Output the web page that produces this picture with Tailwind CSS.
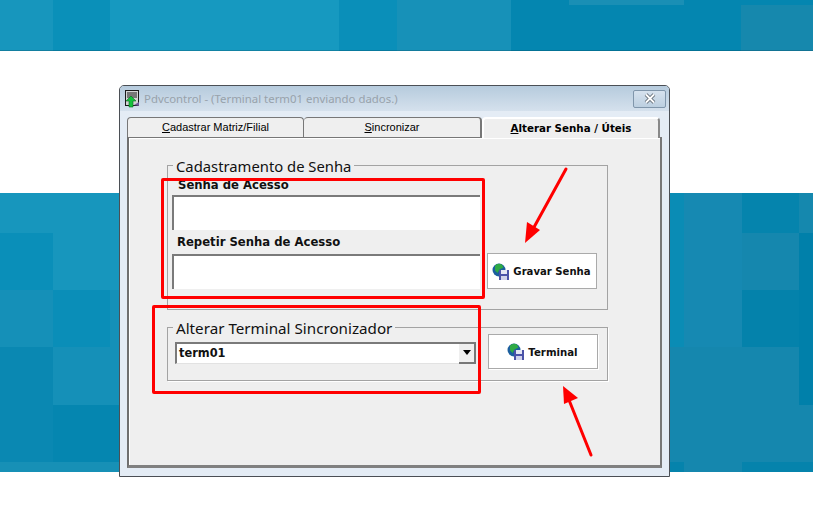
<!DOCTYPE html>
<html lang="pt">
<head>
<meta charset="utf-8">
<title>Pdvcontrol</title>
<script src="https://cdn.jsdelivr.net/npm/@tailwindcss/browser@4"></script>
</head>
<body class="bg-white overflow-hidden">
<div class="relative w-[813px] h-[532px] bg-white overflow-hidden font-['Noto_Sans',sans-serif]">

  <svg class="absolute left-0 top-0" width="813" height="532" shape-rendering="crispEdges" aria-hidden="true">
    <rect x="0" y="0" width="53" height="51" fill="#1796bd"/>
    <rect x="53" y="0" width="57" height="51" fill="#0a90b9"/>
    <rect x="110" y="0" width="229" height="51" fill="#1699c0"/>
    <rect x="339" y="0" width="58" height="51" fill="#0a8fb9"/>
    <rect x="397" y="0" width="114" height="51" fill="#1791b8"/>
    <rect x="511" y="0" width="302" height="51" fill="#0486b0"/>
    <rect x="569" y="0" width="115" height="5" fill="#1a8fb5"/>
    <rect x="741" y="5" width="72" height="46" fill="#1688ad"/>
    <rect x="0" y="50" width="813" height="1" fill="#000" fill-opacity=".15"/>

    <rect x="0" y="193" width="813" height="279" fill="#1590b8"/>
    <rect x="0" y="193" width="130" height="40" fill="#1796bd"/>
    <rect x="53" y="233" width="77" height="57" fill="#1796bd"/>
    <rect x="0" y="233" width="53" height="57" fill="#0a8fb9"/>
    <rect x="53" y="290" width="57" height="57" fill="#0a8eb8"/>
    <rect x="0" y="347" width="53" height="115" fill="#0a88b2"/>
    <rect x="53" y="405" width="70" height="57" fill="#0586b0"/>
    <rect x="0" y="462" width="130" height="10" fill="#1790b6"/>

    <rect x="660" y="193" width="24" height="154" fill="#0a8cb5"/>
    <rect x="684" y="193" width="58" height="279" fill="#1689b2"/>
    <rect x="742" y="193" width="57" height="40" fill="#0584ad"/>
    <rect x="799" y="193" width="14" height="40" fill="#1588ae"/>
    <rect x="742" y="233" width="57" height="57" fill="#1587ae"/>
    <rect x="799" y="233" width="14" height="172" fill="#0080aa"/>
    <rect x="742" y="290" width="57" height="57" fill="#0482ab"/>
    <rect x="660" y="347" width="139" height="115" fill="#1587ae"/>
    <rect x="799" y="405" width="14" height="57" fill="#1587ae"/>
    <rect x="660" y="462" width="24" height="10" fill="#0583ac"/>
    <rect x="684" y="462" width="58" height="10" fill="#1587ae"/>
    <rect x="742" y="462" width="71" height="10" fill="#0583ac"/>
  </svg>

  <!-- Window -->
  <div class="absolute left-[119px] top-[85px] w-[551px] h-[392px] border border-[#4b4f55] rounded-t-[5px] bg-[#e4ecf5] flex flex-col px-[7px] pb-[8px]">
    <!-- Title bar -->
    <div class="h-[25px] -mx-[7px] pl-[4px] pr-[3px] rounded-t-[4px] bg-gradient-to-b from-[#b6cbdd] to-[#d5e1ed] flex items-center shrink-0">
      <svg width="16" height="18" viewBox="0 0 16 18" class="shrink-0" aria-hidden="true">
        <rect x="1.500" y="0.500" width="13" height="15" fill="#d4d4d4" stroke="#1a1a1a"/>
        <path d="M3 3h10M3 5h10M3 7h10" stroke="#1a1a1a"/>
        <path d="M7 6l5 5h-3v6H5v-6H2z" fill="#14c23c" stroke="#0a6a20" stroke-width=".6"/>
        <path d="M10 15l5-3v4z" fill="#6f5a9a"/>
      </svg>
      <span class="ml-[4px] text-[11.4px] leading-none text-[#98a2ab] whitespace-nowrap">Pdvcontrol - (Terminal term01 enviando dados.)</span>
      <div class="ml-auto w-[33px] h-[18px] rounded-[2px] border border-[#8096ab] bg-gradient-to-b from-[#d6e2ee] to-[#bccfe0] flex items-center justify-center">
        <svg width="14" height="11" viewBox="0 0 14 11" aria-hidden="true">
          <path d="M3 1.500l8 8M11 1.500l-8 8" stroke="#5c6670" stroke-width="3.6"/>
          <path d="M3 1.500l8 8M11 1.500l-8 8" stroke="#fff" stroke-width="1.800"/>
        </svg>
      </div>
    </div>

    <!-- Tabs -->
    <div class="flex h-[20px] mt-[6px] shrink-0 text-[11px] text-black font-['Liberation_Sans',sans-serif]">
      <div class="w-[177px] rounded-t-[4px] border border-b-0 border-[#777] bg-[#efefef] flex items-center justify-center"><span><span class="underline">C</span>adastrar Matriz/Filial</span></div>
      <div class="w-[178px] rounded-t-[4px] border-t border-r-2 border-[#777] bg-[#efefef] flex items-center justify-center"><span><span class="underline">S</span>incronizar</span></div>
      <div class="w-[178px] rounded-t-[4px] border-t-2 border-l-2 border-t-[#fff] border-l-[#fff] border-r-2 border-r-[#888] bg-[#efefef] flex items-center justify-center font-bold font-['DejaVu_Sans',sans-serif] text-[10.3px] -mb-[1px] relative z-10"><span><span class="underline">A</span>lterar Senha / Úteis</span></div>
    </div>

    <!-- Tab panel -->
    <div class="flex-1 border-l-2 border-l-[#6f6f6f] border-t border-t-[#777] border-r-2 border-r-[#777] border-b-[3px] border-b-[#808080] bg-[#efefef] shadow-[inset_1px_1px_0_#fff] pl-[38px] pr-[51px] pt-[16px]">

      <fieldset class="w-[441px] h-[156px] border border-[#a3a3a3] pl-[4px] pr-[9px]">
        <legend class="ml-[1px] px-[3px] text-[14.8px] leading-[22px] text-[#111]"><span class="relative top-[1px]">Cadastramento de Senha</span></legend>
        <div class="flex items-end">
          <div class="w-[308px] font-['DejaVu_Sans',sans-serif] font-bold text-[11.65px] text-[#111]">
            <div class="h-[19px] pl-[6px] pt-[3px] leading-[12px]">Senha de Acesso</div>
            <div class="h-[35px] bg-white border-t-2 border-l-2 border-[#7a7a7a]"></div>
            <div class="h-[24px] pl-[5px] pt-[3px] leading-[18px]">Repetir Senha de Acesso</div>
            <div class="h-[35px] bg-white border-t-2 border-l-2 border-[#7a7a7a]"></div>
          </div>
          <button class="ml-[7px] w-[110px] h-[36px] bg-white border border-[#aaa] flex items-center justify-center gap-[2px] font-['DejaVu_Sans',sans-serif] font-bold text-[10.1px] text-[#111]">
            <svg width="18" height="18" viewBox="0 0 18 18" class="relative top-[1px] -left-[1px]" aria-hidden="true">
              <circle cx="7" cy="7" r="6.500" fill="#1b5f9e"/>
              <path d="M3 2.500q3-3 7-1l1.500 3-4 2-2 3.500-2.500-2.500z" fill="#2faa45"/>
              <rect x="7" y="7" width="10" height="10" fill="#4a52a8"/>
              <rect x="9" y="7" width="6" height="4" fill="#e4e6f4"/>
              <rect x="9" y="13" width="6" height="4" fill="#d0d2ea"/>
            </svg>
            <span class="relative top-[1px]">Gravar Senha</span>
          </button>
        </div>
      </fieldset>

      <fieldset class="mt-[6px] w-[441px] h-[65px] border border-[#a3a3a3] shadow-[1px_1px_0_#fff] pl-[7px] pr-[9px] flex-none">
        <legend class="-ml-[2px] px-[3px] text-[15.2px] leading-[22px] text-[#111]"><span class="relative top-[1px]">Alterar Terminal Sincronizador</span></legend>
        <div class="flex items-start">
          <div class="w-[301px] h-[22px] mt-[4px] bg-white border-t-2 border-l-2 border-[#7a7a7a] border-b border-b-[#e2e2e2] flex items-center justify-between">
            <span class="pl-[2px] font-['DejaVu_Sans',sans-serif] font-bold text-[11.4px] leading-none text-[#111]">term01</span>
            <span class="w-[17px] h-[20px] bg-[#efefef] border-r-2 border-b-2 border-[#777] flex items-center justify-center">
              <svg width="8" height="5" viewBox="0 0 8 5" aria-hidden="true"><path d="M0 0h8L4 5z" fill="#000"/></svg>
            </span>
          </div>
          <button class="ml-[12px] -mt-[4px] w-[110px] h-[35px] bg-white border border-[#aaa] shadow-[1px_1px_0_#fff] flex items-center justify-center gap-[2px] font-['DejaVu_Sans',sans-serif] font-bold text-[10.2px] text-[#111]">
            <svg width="18" height="18" viewBox="0 0 18 18" class="relative -left-[1px]" aria-hidden="true">
              <circle cx="7" cy="7" r="6.500" fill="#1b5f9e"/>
              <path d="M3 2.500q3-3 7-1l1.500 3-4 2-2 3.500-2.500-2.500z" fill="#2faa45"/>
              <rect x="7" y="7" width="10" height="10" fill="#4a52a8"/>
              <rect x="9" y="7" width="6" height="4" fill="#e4e6f4"/>
              <rect x="9" y="13" width="6" height="4" fill="#d0d2ea"/>
            </svg>
            <span class="relative top-[1px]">Terminal</span>
          </button>
        </div>
      </fieldset>
    </div>
  </div>

  <!-- Annotations -->
  <div class="absolute left-[161px] top-[178px] w-[324px] h-[121px] border-[3px] border-[#ff0000] rounded-[2px]"></div>
  <div class="absolute left-[152px] top-[305px] w-[329px] h-[89px] border-[3px] border-[#ff0000] rounded-[2px]"></div>
  <svg class="absolute left-0 top-0 pointer-events-none" width="813" height="532" aria-hidden="true">
    <path d="M566 169L533 229" stroke="#ff0000" stroke-width="3" stroke-linecap="round"/>
    <path d="M525 243L527 222L540 230z" fill="#ff0000"/>
    <path d="M591 455L569 400" stroke="#ff0000" stroke-width="3" stroke-linecap="round"/>
    <path d="M563 386L578 398L564 404z" fill="#ff0000"/>
  </svg>
</div>
</body>
</html>
